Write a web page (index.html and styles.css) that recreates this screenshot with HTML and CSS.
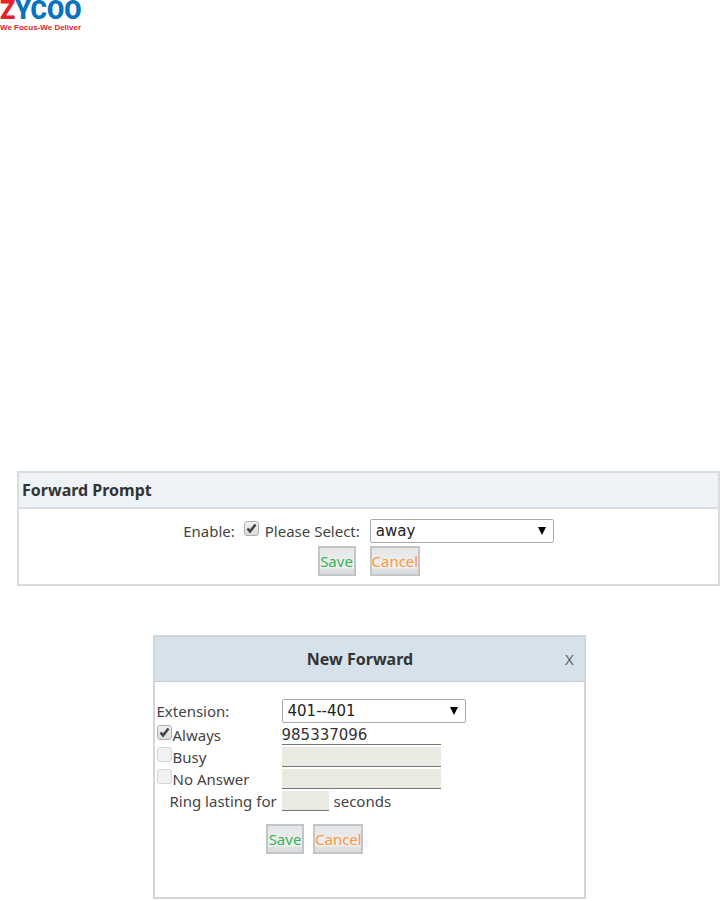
FILE: index.html
```html
<!DOCTYPE html>
<html lang="en">
<head>
  <meta charset="UTF-8">
  <meta name="viewport" content="width=device-width, initial-scale=1.0">
  <title>Zycoo - Call Forward</title>
  <link rel="stylesheet" href="styles.css">
</head>
<body>

  <header class="site-header">
    <svg class="logo" width="84" height="34" viewBox="0 0 84 34" role="img" aria-label="Zycoo">
      <text class="logo-name blue" x="0" y="19"><tspan class="red">Z</tspan>YCOO</text>
      <text class="logo-slogan red" x="0" y="30">We Focus-We Deliver</text>
    </svg>
  </header>

  <main>
    <!-- Forward prompt -->
    <form class="panel">
      <h2 class="panel-title">Forward Prompt</h2>
      <div class="panel-body">
        <div class="prompt-row">
          <label for="enable">Enable:</label>
          <input type="checkbox" id="enable" class="check" checked>
          <label for="prompt">Please Select:</label>
          <select id="prompt" class="select">
            <option>away</option>
          </select>
        </div>
        <div class="buttons buttons-wide">
          <button type="button" class="btn save">Save</button>
          <button type="button" class="btn cancel">Cancel</button>
        </div>
      </div>
    </form>

    <!-- New forward dialog -->
    <form class="dialog">
      <div class="dialog-head">
        <h2>New Forward</h2>
        <button type="button" class="close" aria-label="Close">X</button>
      </div>
      <div class="dialog-body">
        <div class="row first">
          <label for="extension">Extension:</label>
          <select id="extension" class="select">
            <option>401--401</option>
          </select>
        </div>
        <div class="row">
          <label><input type="checkbox" class="check" checked>Always</label>
          <input type="text" class="field" value="985337096" aria-label="Always forward to">
        </div>
        <div class="row">
          <label><input type="checkbox" class="check" disabled>Busy</label>
          <input type="text" class="field" aria-label="Busy forward to" disabled>
        </div>
        <div class="row">
          <label><input type="checkbox" class="check" disabled>No Answer</label>
          <input type="text" class="field" aria-label="No answer forward to" disabled>
        </div>
        <div class="row">
          <label for="ring" class="indent">Ring lasting for</label>
          <span class="ring">
            <input type="text" id="ring" class="field short" disabled>
            seconds
          </span>
        </div>
        <div class="buttons">
          <button type="button" class="btn save">Save</button>
          <button type="button" class="btn cancel">Cancel</button>
        </div>
      </div>
    </form>
  </main>

</body>
</html>
```

FILE: styles.css
```css
* {
  margin: 0;
  padding: 0;
  box-sizing: border-box;
}

body {
  font-family: "Noto Sans", sans-serif;
  font-size: 15px;
  line-height: 22px;
  color: #444;
  background: #fff;
}

/* Logo */
.site-header {
  height: 471px;
}

.logo {
  display: block;
  overflow: visible;
}

.logo-name {
  font-family: Roboto, sans-serif;
  font-size: 25px;
  font-weight: 900;
}

.logo-slogan {
  font-family: "Liberation Sans", sans-serif;
  font-size: 8px;
  font-weight: bold;
}

.red {
  fill: #e8202a;
}

.blue {
  fill: #0872bd;
}

/* Forward prompt */
.panel {
  margin: 0 2px 0 17px;
  border: 2px solid #d9dcdd;
}

.panel-title {
  padding: 6px 3px;
  font-size: 16px;
  line-height: 22px;
  color: #333;
  background: #edf3f7;
  border-bottom: 2px solid #d9dcdd;
}

.panel-body {
  padding: 10px 0 8px;
}

.prompt-row {
  display: flex;
  justify-content: center;
  align-items: center;
  gap: 6px;
}

.prompt-row .check {
  margin-left: 3px;
}

.prompt-row .select {
  margin-left: 4px;
}

/* Controls */
.select {
  width: 184px;
  height: 24px;
  padding: 0 24px 0 5px;
  appearance: none;
  font-family: "DejaVu Sans", sans-serif;
  font-size: 15px;
  color: #222;
  border: 1px solid #aaa;
  border-radius: 2px;
  background: #fff url("data:image/svg+xml,%3Csvg xmlns='http://www.w3.org/2000/svg' width='8' height='8'%3E%3Cpath d='M0 0h8L4 8z'/%3E%3C/svg%3E") no-repeat right 7px center;
}

.check {
  flex: none;
  width: 15px;
  height: 15px;
  margin-bottom: 5px;
  appearance: none;
  border: 1px solid #b0b0b0;
  border-radius: 3px;
  background: linear-gradient(#f0f0f0, #ddd);
}

.check:checked {
  background: url("data:image/svg+xml,%3Csvg xmlns='http://www.w3.org/2000/svg' width='13' height='13'%3E%3Cpath d='M2.5 6.5L5 9.5L10.5 2.5' fill='none' stroke='%23444' stroke-width='2.6'/%3E%3C/svg%3E") no-repeat center, linear-gradient(#f0f0f0, #ddd);
}

.check:disabled {
  border-color: #d4d4d4;
  background: #f1f1f1;
}

.buttons {
  display: flex;
  justify-content: center;
  gap: 9px;
}

.buttons-wide {
  gap: 14px;
  margin-top: 3px;
}

.btn {
  height: 30px;
  font-family: inherit;
  font-size: 15px;
  border: 2px solid #c3c6c9;
  background: linear-gradient(#e4e5e6, #efefef 75%, #dcddde 85%);
}

.save {
  width: 38px;
  color: #35b558;
}

.cancel {
  width: 50px;
  color: #ff9640;
}

/* New forward dialog */
.dialog {
  width: 60%;
  max-width: 433px;
  min-height: 264px;
  margin: 49px auto 0;
  border: 2px solid #d3d6d8;
  position: relative;
  left: 8px;
}

.dialog-head {
  display: grid;
  grid-template-columns: 10px 1fr 28px;
  align-items: center;
  height: 45px;
  background: #d6e2eb;
  border-bottom: 1px solid #c4c8cb;
}

.dialog-head h2 {
  grid-column: 2;
  font-size: 16px;
  text-align: center;
  color: #333;
}

.close {
  height: 24px;
  font-family: inherit;
  font-size: 15px;
  color: #666;
  border: none;
  background: none;
  cursor: pointer;
}

.dialog-body {
  padding: 16px 2px 20px;
}

.row {
  display: grid;
  grid-template-columns: 125px 1fr;
  align-items: center;
  height: 22px;
}

.row.first {
  height: 26px;
}

.row label {
  display: flex;
  align-items: center;
  gap: 1px;
  white-space: nowrap;
}

.row .indent {
  padding-left: 13px;
}

.field {
  width: 159px;
  height: 20px;
  font-family: "DejaVu Sans", sans-serif;
  font-size: 15px;
  color: #333;
  border: none;
  border-bottom: 1px solid #777;
  background: #fff;
}

.field:disabled {
  background: #eaeae2;
}

.field.short {
  width: 47px;
}

.ring {
  display: flex;
  align-items: center;
  gap: 5px;
}

.dialog .buttons {
  margin-top: 12px;
  padding-right: 109px;
}
```
